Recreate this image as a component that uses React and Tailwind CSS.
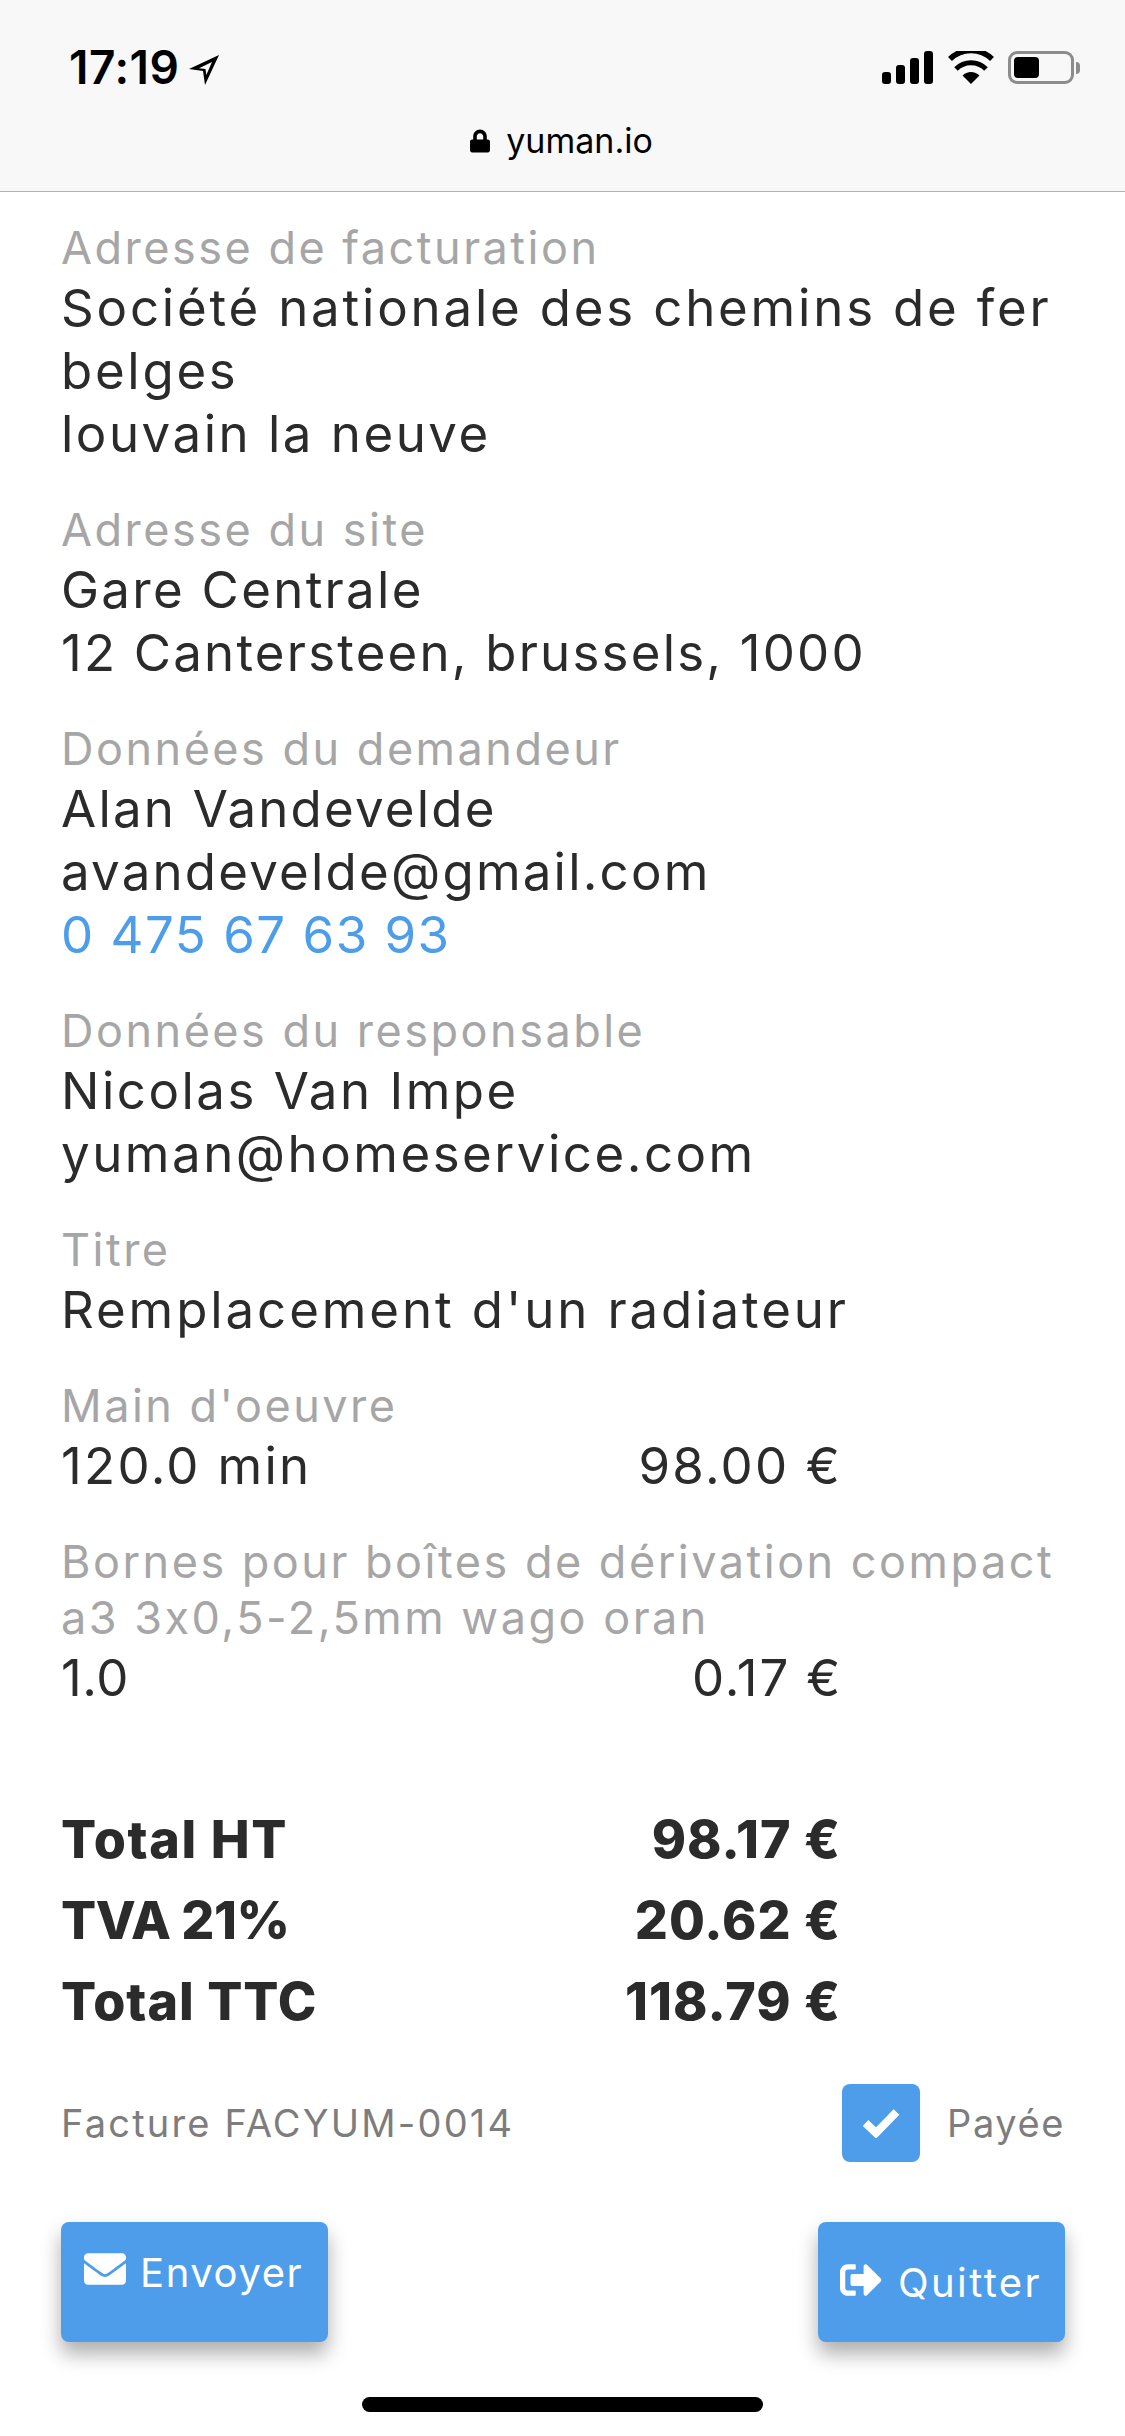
import React from "react";
import { FaEnvelope, FaSignOutAlt, FaLock } from "react-icons/fa";

function Section({ label, children }) {
  return (
    <div className="mb-[37px]">
      {label.map((l) => (
        <div key={l} className="text-[45px] leading-[56px] tracking-[2.5px] text-[#a6a6a6] whitespace-nowrap">{l}</div>
      ))}
      {children}
    </div>
  );
}

function Line({ children, className = "tracking-[2.7px]" }) {
  return <div className={`text-[51px] leading-[63px] text-[#2b2b2b] whitespace-nowrap ${className}`}>{children}</div>;
}

function Row({ left, right, leftClass, rightClass }) {
  return (
    <div className="flex justify-between w-[781px] text-[51px] leading-[63px] text-[#2b2b2b]">
      <span className={leftClass}>{left}</span>
      <span className={rightClass}>{right}</span>
    </div>
  );
}

function Total({ left, right, leftClass = "tracking-[1px]" }) {
  return (
    <div className="flex justify-between w-[780px] text-[52px] leading-[81px] font-extrabold text-[#2b2b2b]">
      <span className={leftClass}>{left}</span>
      <span className="tracking-[1px]">{right}</span>
    </div>
  );
}

export default function App() {
  return (
    <div className="relative w-[1125px] h-[2436px] bg-white overflow-hidden font-['Inter',sans-serif]">
      <header className="h-[192px] bg-[#f8f8f8] border-b border-[#b4b4b4] flex flex-col">
        <div className="h-[102px] pt-[44px] pl-[69px] pr-[44px] flex justify-between items-start">
          <div className="flex items-center gap-[9px] h-[46px]">
            <span className="text-[46px] leading-[46px] font-semibold text-black tracking-[0.5px]">17:19</span>
            <svg width="32" height="32" viewBox="0 0 32 32" className="mt-[6px]">
              <path d="M31 1 L1 15 L15 17 L17 31 Z M24 8 L11 14.3 L17.5 15 L18.3 21 Z" fill="#000" fillRule="evenodd" />
            </svg>
          </div>
          <div className="flex items-center gap-[14px] pt-[7px] pr-[1px]">
            <svg width="52" height="33" viewBox="0 0 52 33">
              <rect x="0" y="21" width="9" height="12" rx="3" fill="#000" />
              <rect x="14" y="14" width="9" height="19" rx="3" fill="#000" />
              <rect x="28" y="7" width="9" height="26" rx="3" fill="#000" />
              <rect x="42" y="0" width="9" height="33" rx="3" fill="#000" />
            </svg>
            <svg width="46" height="33" viewBox="0 0 46 33">
              <path d="M23 33 L14.5 24.5 A12 12 0 0 1 31.5 24.5 Z" fill="#000" />
              <path d="M8 17 A21 21 0 0 1 38 17" fill="none" stroke="#000" strokeWidth="5" transform="translate(0 1)" />
              <path d="M2 9 A30 30 0 0 1 44 9" fill="none" stroke="#000" strokeWidth="5.5" transform="translate(0 -1)" />
            </svg>
            <div className="flex items-center">
              <div className="w-[66px] h-[33px] rounded-[9px] border-[3px] border-[#8c8c8c] p-[3px]">
                <div className="w-[25px] h-full rounded-[4px] bg-black" />
              </div>
              <div className="w-[4px] h-[12px] ml-[2px] rounded-r-[4px] bg-[#8c8c8c]" />
            </div>
          </div>
        </div>
        <div className="flex justify-center items-center gap-[16px] h-[46px] mt-[16px] pr-[2px]">
          <FaLock className="w-[20px] h-[24px] text-black" />
          <span className="text-[34px] leading-[46px] text-black">yuman.io</span>
        </div>
      </header>

      <main className="pl-[61px] pt-[28px]">
        <Section label={["Adresse de facturation"]}>
          <Line className="tracking-[2.8px]">Société nationale des chemins de fer</Line>
          <Line>belges</Line>
          <Line className="tracking-[2.5px]">louvain la neuve</Line>
        </Section>
        <Section label={["Adresse du site"]}>
          <Line className="tracking-[2.3px]">Gare Centrale</Line>
          <Line className="tracking-[2.2px]">12 Cantersteen, brussels, 1000</Line>
        </Section>
        <Section label={["Données du demandeur"]}>
          <Line className="tracking-[2.2px]">Alan Vandevelde</Line>
          <Line className="tracking-[2.2px]">avandevelde@gmail.com</Line>
          <Line className="tracking-[1.5px] !text-[#4d9deb]">0 475 67 63 93</Line>
        </Section>
        <Section label={["Données du responsable"]}>
          <Line className="tracking-[2.5px]">Nicolas Van Impe</Line>
          <Line className="tracking-[2.5px]">yuman@homeservice.com</Line>
        </Section>
        <Section label={["Titre"]}>
          <Line className="tracking-[2.9px]">Remplacement d'un radiateur</Line>
        </Section>
        <Section label={["Main d'oeuvre"]}>
          <Row left="120.0 min" right="98.00 €" leftClass="tracking-[2.3px]" rightClass="tracking-[2.2px]" />
        </Section>
        <Section label={["Bornes pour boîtes de dérivation compact", "a3 3x0,5-2,5mm wago oran"]}>
          <Row left="1.0" right="0.17 €" leftClass="tracking-[0.5px]" rightClass="tracking-[1.8px]" />
        </Section>
        <div className="mt-[90px]">
          <Total left="Total HT" right="98.17 €" leftClass="tracking-[1.6px]" />
          <Total left="TVA 21%" right="20.62 €" leftClass="tracking-[-0.5px]" />
          <Total left="Total TTC" right="118.79 €" />
        </div>
        <div className="mt-[42px] flex items-center justify-between w-[1004px] h-[78px]">
          <span className="text-[38px] tracking-[2.2px] text-[#7d7d7d]">Facture FACYUM-0014</span>
          <div className="flex items-center gap-[27px]">
            <div className="w-[78px] h-[78px] rounded-[8px] bg-[#4d9deb] flex items-center justify-center">
              <svg width="38" height="30" viewBox="0 0 38 30">
                <path d="M3.5 15 L14 25 L34.5 4" fill="none" stroke="#fff" strokeWidth="8" />
              </svg>
            </div>
            <span className="text-[38px] tracking-[1.6px] text-[#7d7d7d]">Payée</span>
          </div>
        </div>
        <div className="mt-[60px] flex justify-between w-[1004px]">
          <button className="w-[267px] h-[120px] rounded-[8px] bg-[#4d9deb] shadow-[0_12px_20px_rgba(0,0,0,0.32)] flex items-start gap-[14px] pl-[23px] pt-[28px] text-white">
            <FaEnvelope className="w-[42px] h-[42px] -mt-[2px]" />
            <span className="text-[40px] leading-[46px] tracking-[1.6px]">Envoyer</span>
          </button>
          <button className="w-[247px] h-[120px] rounded-[8px] bg-[#4d9deb] shadow-[0_12px_20px_rgba(0,0,0,0.32)] flex items-start gap-[16px] pl-[22px] pt-[38px] text-white">
            <FaSignOutAlt className="w-[42px] h-[42px] -mt-[1px]" />
            <span className="text-[40px] leading-[46px] tracking-[2.4px]">Quitter</span>
          </button>
        </div>
      </main>

      <div className="absolute left-[362px] top-[2397px] w-[401px] h-[15px] rounded-full bg-black" />
    </div>
  );
}
